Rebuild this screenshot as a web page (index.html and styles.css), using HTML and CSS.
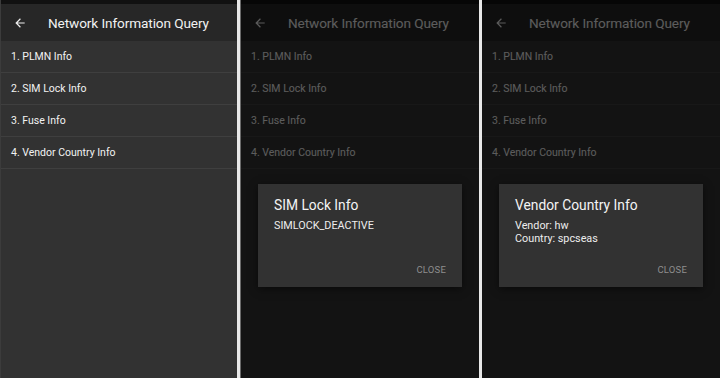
FILE: index.html
```html
<html><head><meta charset="utf-8">
<title>Network Information Query</title>
<link rel="stylesheet" href="styles.css">
</head><body>
<div class="strip">

  <div class="screen first">
    <div class="status"></div>
    <div class="header">
      <svg class="back" viewBox="0 0 24 24" width="14" height="14"><path d="M20 11H7.83l5.59-5.59L12 4l-8 8 8 8 1.41-1.41L7.83 13H20v-2z" fill="currentColor"/></svg>
      <span class="title">Network Information Query</span>
    </div>
    <div class="list">
      <div class="item">1. PLMN Info</div>
      <div class="item">2. SIM Lock Info</div>
      <div class="item">3. Fuse Info</div>
      <div class="item">4. Vendor Country Info</div>
    </div>
  </div>

  <div class="divider wide"></div>

  <div class="screen">
    <div class="status"></div>
    <div class="header">
      <svg class="back" viewBox="0 0 24 24" width="14" height="14"><path d="M20 11H7.83l5.59-5.59L12 4l-8 8 8 8 1.41-1.41L7.83 13H20v-2z" fill="currentColor"/></svg>
      <span class="title">Network Information Query</span>
    </div>
    <div class="list">
      <div class="item">1. PLMN Info</div>
      <div class="item">2. SIM Lock Info</div>
      <div class="item">3. Fuse Info</div>
      <div class="item">4. Vendor Country Info</div>
    </div>
    <div class="scrim"></div>
    <div class="dialog">
      <div class="dialog-title">SIM Lock Info</div>
      <div class="dialog-body">SIMLOCK_DEACTIVE</div>
      <div class="dialog-actions"><span class="close">CLOSE</span></div>
    </div>
  </div>

  <div class="divider"></div>

  <div class="screen">
    <div class="status"></div>
    <div class="header">
      <svg class="back" viewBox="0 0 24 24" width="14" height="14"><path d="M20 11H7.83l5.59-5.59L12 4l-8 8 8 8 1.41-1.41L7.83 13H20v-2z" fill="currentColor"/></svg>
      <span class="title">Network Information Query</span>
    </div>
    <div class="list">
      <div class="item">1. PLMN Info</div>
      <div class="item">2. SIM Lock Info</div>
      <div class="item">3. Fuse Info</div>
      <div class="item">4. Vendor Country Info</div>
    </div>
    <div class="scrim"></div>
    <div class="dialog">
      <div class="dialog-title">Vendor Country Info</div>
      <div class="dialog-body">Vendor: hw<br>Country: spcseas</div>
      <div class="dialog-actions"><span class="close">CLOSE</span></div>
    </div>
  </div>

</div>
</body></html>
```

FILE: styles.css
```css
body {
  margin: 0;
  background-color: #111;
  font-family: Roboto, "Liberation Sans", sans-serif;
  overflow: hidden;
}
.strip {
  display: flex;
  width: 720px;
  height: 378px;
}
.screen {
  position: relative;
  width: 238px;
  height: 378px;
  background-color: #323232;
  color: #f2f2f2;
  overflow: hidden;
}
.screen.first {
  width: 237px;
  border-left: 1px solid #3c3c3c;
  box-sizing: border-box;
}
.divider {
  width: 3px;
  background-color: #e8e8e8;
}
.divider.wide {
  width: 4px;
  border-right: 1px solid #6a6a6a;
  box-sizing: border-box;
}
.status {
  height: 4px;
  background-color: #111;
}
.header {
  display: flex;
  align-items: center;
  height: 37px;
  background-color: #272727;
  padding-left: 12px;
}
.back {
  color: #eee;
}
.title {
  margin-left: 21px;
  font-size: 13.6px;
  letter-spacing: -0.1px;
}
.item {
  height: 32px;
  line-height: 32px;
  padding-left: 10px;
  font-size: 10.5px;
  border-bottom: 1px solid #3f3f3f;
  box-sizing: border-box;
}
.scrim {
  position: absolute;
  inset: 0;
  background-color: rgba(0, 0, 0, 0.62);
}
.dialog {
  position: absolute;
  left: 17px;
  top: 184px;
  width: 204px;
  height: 103px;
  box-sizing: border-box;
  padding: 12px 16px 0 16px;
  background-color: #323232;
  box-shadow: 0 2px 8px rgba(0,0,0,0.5);
  display: flex;
  flex-direction: column;
}
.dialog-title {
  font-size: 13.8px;
  color: #f4f4f4;
  line-height: 18px;
}
.dialog-body {
  margin-top: 5px;
  font-size: 10.8px;
  line-height: 13px;
  color: #ededed;
}
.dialog-actions {
  margin-top: auto;
  height: 36px;
  display: flex;
  justify-content: flex-end;
  align-items: center;
}
.close {
  font-size: 9.5px;
  color: #8e8e8e;
  letter-spacing: 0.2px;
}
```
